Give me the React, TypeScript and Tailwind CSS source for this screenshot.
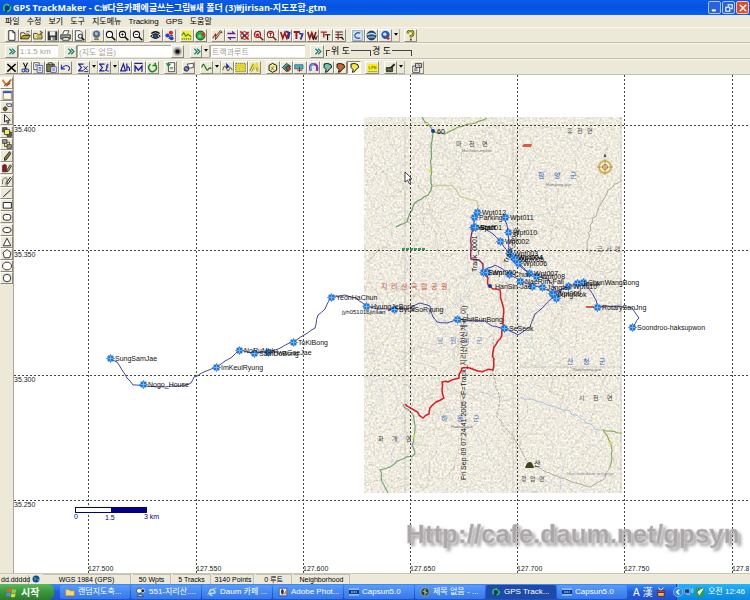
import type { ReactNode } from 'react';
import clsx from 'clsx';

const FONT = "font-['Liberation_Sans','Noto_Sans_CJK_KR',sans-serif]";

/* ---------- icons, all on a 16x16 grid ---------- */

const K = '#111';
const lens = (color = K) => (
  <>
    <circle cx="6.5" cy="6.5" r="4.5" fill="#fff" stroke={color} strokeWidth="1.5" />
    <path d="M10 10l5 5" stroke={color} strokeWidth="2.2" />
  </>
);
const pencil = <path d="M14 2l-7 9-2 3 0-4 7-9z" fill="#ffe98a" stroke={K} />;
const korea = (fill: string) => (
  <path d="M3 3l5-1 5 2 1 4-3 2-3 4-3 1 1-4-3-3z" fill={fill} stroke={K} strokeWidth="1.4" />
);
const letterW = (extra?: ReactNode) => (
  <>
    <path d="M1 3l3 9 3-8 3 8 3-9" fill="none" stroke="#a01818" strokeWidth="2.4" />
    {extra}
  </>
);

const ICONS: Record<string, ReactNode> = {
  new: <path d="M4 1h6l3 3v11H4z M10 1v3h3" fill="#fff" stroke={K} strokeWidth="1.2" />,
  open: (
    <>
      <path d="M1 13V4h5l1 2h6v2" fill="#fff3a0" stroke={K} />
      <path d="M1 13l3-5h11l-3 5z" fill="#b8a52a" stroke={K} />
      <path d="M9 3q3-3 5 0" fill="none" stroke={K} />
    </>
  ),
  merge: (
    <>
      <path d="M1 13V5h5l1 2h6v6z" fill="#f7ed90" stroke={K} />
      <path d="M4 9h7M6 11h8" stroke="#8a7b1c" />
      <path d="M10 1l4 3-4 2" fill="#d8b030" stroke={K} />
    </>
  ),
  save: (
    <>
      <path d="M1 2h14v13H1z" fill="#333" />
      <path d="M4 2h8v6H4z" fill="#eee" />
      <path d="M5 10h7v5H5z" fill="#888" />
      <path d="M6 11h2v4H6z" fill="#fff" />
    </>
  ),
  print: (
    <>
      <path d="M4 6l2-5h7l-2 5" fill="#fff" stroke={K} />
      <path d="M1 7h14v6H1z" fill="#999" stroke={K} />
      <path d="M4 11h9v4H4z" fill="#eee" stroke={K} />
      <path d="M11 9h2" stroke="#e8e020" strokeWidth="1.5" />
    </>
  ),
  preview: (
    <>
      <path d="M2 1h7l3 3v11H2z" fill="#fff" stroke={K} />
      <circle cx="9" cy="9" r="3" fill="#d7f0f6" stroke={K} strokeWidth="1.3" />
      <path d="M11 11l4 4" stroke={K} strokeWidth="2" />
    </>
  ),
  globe: (
    <>
      <circle cx="8" cy="6" r="5" fill="#2f6fd8" stroke="#777" />
      <path d="M6 3l4 1-1 4-3-1z" fill="#e4d040" />
      <path d="M5 14h6l-2-3H7z" fill="#c9ab34" stroke="#6a5514" />
    </>
  ),
  zoom: lens(),
  zoomIn: <>{lens()}<path d="M4 6.5h5M6.500 4v5" stroke={K} /></>,
  zoomOut: <>{lens()}<path d="M4 6.500h5" stroke={K} /></>,
  eye: (
    <>
      <path d="M1 9q7-7 14 0q-7 6-14 0z" fill="#fff" stroke={K} strokeWidth="1.4" />
      <circle cx="8" cy="9" r="3.500" fill="#1b4f9e" stroke={K} />
      <path d="M2 5q6-5 12 0" fill="none" stroke={K} strokeWidth="2" />
    </>
  ),
  pins: (
    <>
      <circle cx="10" cy="4" r="3" fill="#e02020" />
      <circle cx="5" cy="8" r="3" fill="#2040d0" />
      <circle cx="11" cy="12" r="3" fill="#2040d0" />
      <path d="M7 13l2-5 4 0" stroke={K} fill="none" />
    </>
  ),
  profile: (
    <>
      <path d="M1 1h14v14H1z" fill="#f4ee3a" />
      <path d="M1 8l3-4 3 5 3-3 5 4" fill="none" stroke="#3a7f18" strokeWidth="1.5" />
      <path d="M1 13h14" stroke="#111" strokeDasharray="2 1" />
    </>
  ),
  radar: (
    <>
      <circle cx="8" cy="8" r="6.5" fill="#20b040" stroke={K} />
      <path d="M8 8l4-5q3 3 2 6z" fill="#e83020" />
      <circle cx="7" cy="9" r="2.500" fill="#58e070" />
    </>
  ),
  trackEdit: <><path d="M1 12l4-6 2 5 4-8 4 1" fill="none" stroke="#b01c1c" strokeWidth="1.6" />{pencil}</>,
  swap: <path d="M2 5h10l-3-3M14 11H4l3 3" fill="none" stroke="#5a1ca8" strokeWidth="2" />,
  findRed: (
    <>
      <circle cx="8" cy="8" r="5.500" fill="#fff" stroke="#222" strokeWidth="1.3" />
      <path d="M2 2l12 12M14 3L3 13" stroke="#d01c1c" strokeWidth="2.400" />
      <path d="M6 8h4" stroke="#2030c0" strokeWidth="2" />
    </>
  ),
  lensW: <>{lens('#822')}<path d="M4 5l1 4 1.500-3 1.500 3 1-4" fill="none" stroke="#d01c1c" strokeWidth="1.600" /></>,
  lensT: <>{lens('#822')}<path d="M4 4.500h5M6.500 4.500v5" stroke="#d01c1c" strokeWidth="1.700" /></>,
  wBlue: letterW(<path d="M8 2l6 2-2 9" fill="none" stroke="#1c2cb0" strokeWidth="2.400" />),
  tBlue: (
    <>
      <path d="M1 3h9M5 3v10" stroke="#a01818" strokeWidth="2.800" />
      <path d="M9 5l5 1-3 8" fill="none" stroke="#1c2cb0" strokeWidth="2.400" />
    </>
  ),
  ww: letterW(<path d="M7 8l2 6 2-5 2 5 2-6" fill="none" stroke="#111" strokeWidth="1.300" />),
  tt: <><path d="M1 3h9M5.500 3v8" stroke="#c01c1c" strokeWidth="2" /><path d="M7 7h8M11 7v8" stroke="#111" strokeWidth="1.600" /></>,
  list: <><path d="M2 3h11M2 7h11M2 11h11" stroke="#333" strokeWidth="1.500" /><path d="M6 3v11" stroke="#a01818" strokeWidth="1.500" /><path d="M10 10l4 4" stroke={K} strokeWidth="2" /></>,
  letterC: (
    <>
      <path d="M1 1h14v14H1z" fill="#d6e6f6" stroke="#6688b8" />
      <path d="M12 4.500q-7-2-8 3.500q1 5.500 8 3.500" fill="none" stroke="#2d5fae" strokeWidth="2" />
    </>
  ),
  earth: (
    <>
      <circle cx="8" cy="8" r="6.500" fill="#1e4f86" stroke="#123" />
      <path d="M2 7q6-4 12 0" fill="none" stroke="#cfe3f3" strokeWidth="2" />
      <path d="M3 11q5-2 10 0" fill="none" stroke="#8fb8d8" strokeWidth="1.500" />
    </>
  ),
  bluePin: (
    <>
      <circle cx="8" cy="7" r="6" fill="#2058c8" />
      <circle cx="7" cy="6" r="2.500" fill="#dce8ff" />
      <path d="M9 9l6 3-4 3z" fill="#d02020" />
    </>
  ),
  help: <><path d="M4 5q0-4 4-4t4 4q0 3-3.500 4v2" fill="none" stroke="#5b5206" strokeWidth="3.400" /><path d="M4 5q0-4 4-4t4 4q0 3-3.500 4v2" fill="none" stroke="#e8dc30" strokeWidth="1.400" /><circle cx="8.500" cy="14" r="1.500" fill="#5b5206" /></>,
  del: <path d="M2 3l12 11M14 3L2 14" stroke="#000" strokeWidth="2.200" />,
  cut: <><path d="M5 1l4 9M11 1L7 10" stroke={K} strokeWidth="1.500" /><circle cx="5" cy="12.500" r="2.200" fill="none" stroke="#1c3ca0" strokeWidth="1.500" /><circle cx="10.500" cy="12.500" r="2.200" fill="none" stroke="#1c3ca0" strokeWidth="1.500" /></>,
  copy: <><path d="M1 1h8v10H1z" fill="#fff" stroke="#222" /><path d="M6 5h8v10H6z" fill="#fff" stroke="#1c2c90" /><path d="M8 8h4M8 10h4M8 12h4M3 4h4M3 6h2" stroke="#1c2c90" /></>,
  paste: <><path d="M1 3h11v11H1z" fill="#777a3c" stroke={K} /><path d="M4 1h5v3H4z" fill="#ddd" stroke={K} /><path d="M7 7h8v8H7z" fill="#fff" stroke="#1c2c90" /><path d="M9 10h4M9 12h4" stroke="#1c2c90" /></>,
  undo: <path d="M2 4v6h5M2 10q5-7 10-4q4 3 0 7" fill="none" stroke="#1c2cb0" strokeWidth="1.500" />,
  sumX: <><path d="M8 3H1l4 5-4 5h7" fill="none" stroke="#1c1c9c" strokeWidth="1.700" /><path d="M8 6l6 6M14 6l-6 6M9 14h6" stroke="#1c1c9c" strokeWidth="1.400" /></>,
  sumL: <><path d="M8 3H1l4 5-4 5h7" fill="none" stroke="#1c1c9c" strokeWidth="1.700" /><path d="M9 13q5-5 4-10q-3 0-2 10l4 0" fill="none" stroke="#1c1c9c" strokeWidth="1.200" /></>,
  deltaH: <path d="M1 13L5 3l3 10zM10 2v11M10 8q4-3 4 5" fill="none" stroke="#1c1c9c" strokeWidth="1.700" />,
  mean: <path d="M2 2h12M3 14V6l5 6 5-6v8" fill="none" stroke="#1c1c9c" strokeWidth="1.900" />,
  rotate: <path d="M5 3q-5 4-1 9t9-1q2-4-1-7M12 1v4h-4" fill="none" stroke="#18841c" strokeWidth="2.200" />,
  sheet: <><path d="M5 1h9v13H5z" fill="#fff" stroke={K} /><path d="M2 2l6 1-3 4z" fill="#189038" stroke="#189038" /><path d="M7 8h5M7 10h5" stroke="#555" /></>,
  gps: <><path d="M6 3l9-1v6L9 9z" fill="#fff" stroke={K} /><circle cx="5" cy="10" r="3.500" fill="#4860c8" stroke={K} /><path d="M3 8l4 4" stroke="#fff" /></>,
  wave: <path d="M1 8q2-7 4-3t3 6 3-1 4 0" fill="none" stroke="#287818" strokeWidth="1.800" />,
  waveArrow: <><path d="M1 12q2-8 4-5t3 5 3-2 4 2" fill="none" stroke="#7a6a18" strokeWidth="1.500" /><path d="M6 1v9l3-2h3z" fill="#1c2cc0" /></>,
  area: <><path d="M1 2h14v12H1z" fill="#e6dc2c" /><path d="M1 2h14v12H1z" fill="none" stroke="#555" strokeDasharray="2 1" /><path d="M4 6h1M8 5h1M11 8h1M6 10h1" stroke="#777" /></>,
  road: <><path d="M1 14L6 3l2 6 3-7 4 12" fill="none" stroke="#e8dc30" strokeWidth="2.600" /><path d="M4 14l3-6M11 8l1 6M1 13L6 3" fill="none" stroke="#8a7c08" strokeWidth="1.300" /></>,
  box3d: <><path d="M3 5l5-3 6 3v7l-6 3-5-3z" fill="#f4f090" stroke={K} strokeWidth="1.400" /><path d="M6 7l4 5M10 6l-4 6" stroke="#555" /></>,
  layers: <><path d="M2 8l6-6 6 4-6 8z" fill="#30a8a8" stroke={K} /><path d="M7 8l4-3 3 5-4 4z" fill="#d83838" stroke={K} /></>,
  flag: <><path d="M1 4h12v6H1z" fill="#48b8c0" stroke="#157" /><path d="M8 7v7M5 12h7" stroke="#c02020" strokeWidth="1.500" /></>,
  magnet: <><path d="M4 13Q1 3 8 3t5 10" fill="none" stroke="#7a38b8" strokeWidth="3.400" /><path d="M4 12Q2 4 8 3.500" fill="none" stroke="#48b8d8" strokeWidth="1.600" /></>,
  korea1: korea('#6cc8a8'),
  korea2: korea('#c86828'),
  korea3: korea('#f6ea40'),
  lpn: <><path d="M1 3h14v10H1z" fill="#f8f000" /><path d="M3 6v4h2M7 10V6h2v2H7M11 10V6l2 4V6M1 14h14" fill="none" stroke="#8a7d00" /></>,
  tool: <><path d="M2 8h9v6H2z" fill="#2a6a30" stroke={K} /><path d="M7 8l6-6 2 2-5 5z" fill="#222" /><path d="M4 11h5" stroke="#e04030" strokeWidth="1.500" /></>,
  props: <><path d="M1 6h10v9H1z" fill="#fff" stroke={K} /><path d="M5 2h9v6H5z" fill="#ccc" stroke={K} /><path d="M3 10h5M3 12h5M9 4l3 2" stroke={K} /></>,
  chevrons: <path d="M5 4l4 4-4 4M9 4l4 4-4 4" fill="none" stroke="#1a8078" strokeWidth="1.800" />,
  dot: <><circle cx="8" cy="8" r="6.500" fill="#bbb" /><circle cx="8" cy="8" r="4.500" fill="#777" /><circle cx="8" cy="8" r="3" fill="#111" /></>,
  paint: <><path d="M1 3l6 9 3-3 5-7" fill="none" stroke="#e08018" strokeWidth="3" /><path d="M3 13l10-9" stroke="#444" strokeWidth="1.500" /><path d="M8 12l5-4" stroke="#c82020" strokeWidth="2" /></>,
  windowIcon: <><path d="M2 2h13v13H2z" fill="#fffbe0" stroke="#555" /><path d="M2 2h13v3H2z" fill="#2050c8" /></>,
  wpt: <><path d="M7 3h8v4H9z" fill="#fff" stroke="#1c2c70" strokeWidth="1.300" /><circle cx="5" cy="11" r="3" fill="#c8c030" stroke={K} /><path d="M1 11h8M5 7v8" stroke={K} /></>,
  cursor: <path d="M4 1v12l3-3 2 5 2-1-2-4h4z" fill="#fff" stroke={K} strokeWidth="1.400" />,
  front: <><path d="M1 1h7v7H1zM8 8h7v7H8z" fill="#666" stroke={K} /><path d="M4 4h8v8H4z" fill="#f0f060" stroke={K} /></>,
  back: <><path d="M4 5h8v7H4z" fill="#f0f060" stroke={K} /><path d="M1 1h7v6H1zM8 9h7v6H8z" fill="#999" stroke={K} /></>,
  pen: <path d="M12 1l2 3-7 10-3 1 0-4z" fill="#8a8040" stroke={K} strokeWidth="1.300" />,
  redPen: <><path d="M1 4q4-3 6 0v10H1z" fill="#981818" stroke={K} /><path d="M13 3l2 2-5 8-2 1 0-3z" fill="#c8b870" stroke={K} strokeWidth="1.200" /></>,
  curvePen: <><path d="M1 13q-1-9 4-10t2 7q-3 5 2 5" fill="none" stroke="#444" strokeWidth="1.200" /><path d="M13 2l2 2-5 8-2 1 0-3z" fill="#fff" stroke={K} strokeWidth="1.400" /></>,
  line: <path d="M2 14L14 3" stroke={K} strokeWidth="1.500" />,
  rect: <path d="M2 4h13v9H2z" fill="#fff" stroke={K} strokeWidth="1.400" />,
  rrect: <rect x="2" y="4" width="12" height="9" rx="3.500" fill="#fff" stroke={K} strokeWidth="1.400" />,
  ellipse: <ellipse cx="8" cy="8" rx="6.500" ry="4" fill="#fff" stroke={K} strokeWidth="1.400" />,
  triangle: <path d="M8 2l6 12H2z" fill="#fff" stroke={K} strokeWidth="1.300" />,
  pentagon: <path d="M8 1l6.500 5-2.500 8H4L1.500 6z" fill="#fff" stroke={K} strokeWidth="1.300" />,
  octagon: <path d="M5 2h6l4 4v4l-4 4H5l-4-4V6z" fill="#fff" stroke={K} strokeWidth="1.300" />,
  circle: <circle cx="8" cy="8" r="6" fill="#fff" stroke={K} strokeWidth="1.300" />,
};

function Icon({ name, className = 'size-[11px]' }: { name: string; className?: string }) {
  return (
    <svg viewBox="0 0 16 16" className={className} aria-hidden="true">
      {ICONS[name]}
    </svg>
  );
}

function ToolButton({ name, active = false }: { name: string; active?: boolean }) {
  return (
    <button
      aria-label={name}
      className={clsx(
        'flex h-[13px] min-w-0 flex-1 items-center justify-center border',
        active
          ? 'border-t-[#8d8a7c] border-l-[#8d8a7c] border-r-white border-b-white bg-[#faf8f0]'
          : 'border-t-white border-l-white border-r-[#8d8a7c] border-b-[#8d8a7c]',
      )}
    >
      <Icon name={name} className="size-[11px] shrink-0" />
    </button>
  );
}

function Caret() {
  return (
    <button aria-label="more" className="flex h-[13px] w-2 items-center justify-center border-r border-b border-r-[#b5b2a2] border-b-[#b5b2a2]">
      <svg viewBox="0 0 6 4" className="w-1"><path d="M0 0h6L3 4z" fill="#000" /></svg>
    </button>
  );
}

function Group({ width, names, active }: { width: string; names: string[]; active?: string }) {
  return (
    <div className={clsx('flex shrink-0', width)}>
      {names.map((n) => <ToolButton key={n} name={n} active={n === active} />)}
    </div>
  );
}

/* ---------- map drawing ---------- */

type Pt = [number, number];

function makeRandom(seed: number) {
  let s = seed;
  return () => {
    s = (s * 16807) % 2147483647;
    return s / 2147483647;
  };
}

// splits every leg in short steps and shakes them a little, like a real GPS log
function trail(points: Pt[], amp: number, seed = 7) {
  const rnd = makeRandom(seed);
  let d = `M${points[0][0]} ${points[0][1]}`;
  for (let i = 1; i < points.length; i++) {
    const [x0, y0] = points[i - 1];
    const [x1, y1] = points[i];
    const n = Math.max(1, Math.round(Math.hypot(x1 - x0, y1 - y0) / 4));
    for (let k = 1; k <= n; k++) {
      const j = k === n ? 0 : amp;
      const x = x0 + ((x1 - x0) * k) / n + (rnd() - 0.5) * j;
      const y = y0 + ((y1 - y0) * k) / n + (rnd() - 0.5) * j;
      d += `L${x.toFixed(1)} ${y.toFixed(1)}`;
    }
  }
  return d;
}

const RIDGE: Pt[] = [
  [110, 358], [117, 362], [122, 370], [127, 378], [133, 385], [143, 386], [165, 387], [187, 385], [191, 383],
  [194, 377], [200, 374], [216, 367], [225, 361], [232, 357], [239, 350], [254, 353], [268, 352], [282, 347],
  [293, 342], [304, 335], [315, 328], [318, 315], [325, 309], [331, 297], [345, 295], [356, 298], [366, 306],
  [378, 309], [394, 309], [408, 309], [420, 303], [430, 306], [433, 317], [437, 322], [447, 323], [457, 319],
  [466, 320], [485, 321], [492, 326], [504, 328], [518, 335], [530, 327], [535, 314], [545, 305], [552, 298],
  [556, 298], [560, 290], [568, 286], [577, 283], [583, 282], [590, 290], [596, 300], [597, 307], [615, 306],
  [632, 308], [639, 318], [635, 324], [632, 327],
];
const NORTH: Pt[] = [
  [477, 212], [474, 217], [474, 227], [484, 228], [493, 234], [500, 241], [509, 253], [518, 263], [529, 273],
  [536, 276], [548, 279], [556, 290], [556, 298],
];
const EAST: Pt[] = [[505, 217], [508, 232], [509, 240], [509, 253], [514, 262], [529, 273]];
const VALLEY: Pt[] = [
  [483, 272], [488, 268], [495, 265], [501, 268], [509, 274], [520, 281], [532, 285], [542, 287], [552, 293],
  [568, 286],
];
const PURPLE: Pt[] = [[474, 227], [471, 237], [471, 259], [479, 260], [483, 264], [483, 272]];
const RED: Pt[] = [
  [483, 272], [488, 278], [488, 285], [493, 289], [500, 290], [503, 306], [504, 328], [498, 341], [493, 352],
  [493, 370], [478, 371], [470, 368], [462, 368], [459, 378], [448, 382], [442, 382], [442, 390], [444, 398],
  [436, 402], [430, 408], [429, 414], [423, 418], [414, 410], [405, 404],
];

const WAYPOINTS: { x: number; y: number; label?: string; bold?: boolean }[] = [
  { x: 110, y: 358, label: 'SungSamJae' },
  { x: 143, y: 384, label: 'Nogo_House' },
  { x: 216, y: 367, label: 'ImKeulRyung' },
  { x: 239, y: 350, label: 'NoRuMok' },
  { x: 254, y: 353, label: 'SamDoBong' },
  { x: 268, y: 352, label: 'HwaGaeJae' },
  { x: 293, y: 342, label: 'ToKiBong' },
  { x: 331, y: 297, label: 'YeonHaChun' },
  { x: 366, y: 306, label: 'HyungJeBong' },
  { x: 394, y: 309, label: 'ByukSoRyung' },
  { x: 457, y: 319, label: 'ChilSunBong' },
  { x: 504, y: 328, label: 'SeSeok' },
  { x: 477, y: 212, label: 'Wpt012' },
  { x: 474, y: 217, label: 'Parking' },
  { x: 473, y: 227, label: 'Wpt001' },
  { x: 475, y: 227, label: 'Start', bold: true },
  { x: 505, y: 217, label: 'Wpt011' },
  { x: 508, y: 232, label: 'Wpt010' },
  { x: 500, y: 241, label: 'Wpt002' },
  { x: 509, y: 253, label: 'Wpt003' },
  { x: 513, y: 257, label: 'Wpt004', bold: true },
  { x: 515, y: 259, label: 'Wpt005' },
  { x: 518, y: 263, label: 'Wpt006' },
  { x: 529, y: 273, label: 'Wpt007' },
  { x: 536, y: 276, label: 'Wpt008' },
  { x: 483, y: 272, label: 'Sam' },
  { x: 487, y: 272, label: 'Wpt000' },
  { x: 509, y: 274, label: 'Chun' },
  { x: 520, y: 281, label: 'NaeRim-Fall' },
  { x: 532, y: 286 },
  { x: 542, y: 287, label: 'Jangter' },
  { x: 552, y: 293, label: 'Wpt009' },
  { x: 553, y: 294, label: 'JungMok' },
  { x: 556, y: 298 },
  { x: 568, y: 286, label: 'Wpt010' },
  { x: 577, y: 283, label: 'Jesuk' },
  { x: 583, y: 282, label: 'ChunWangBong' },
  { x: 597, y: 307, label: 'RotarySanJng' },
  { x: 632, y: 327, label: 'Soondroo-haksupwon' },
];

function Waypoint({ x, y }: { x: number; y: number }) {
  return (
    <g transform={`translate(${x + 0.5} ${y + 0.5})`}>
      <path d="M-4 0H4M0-4V4" stroke="#123c9a" strokeWidth="1" />
      <rect x="-3" y="-3" width="6" height="6" rx="1" fill="#1e78e0" />
      <path d="M-3 0H3M0-3V3" stroke="#7cc4ff" strokeWidth=".8" />
    </g>
  );
}

// faint contour lines and streams on the scanned sheet
function sheetLines(count: number, seed: number, step: number) {
  const rnd = makeRandom(seed);
  const out: string[] = [];
  for (let i = 0; i < count; i++) {
    let x = 364 + rnd() * 258;
    let y = 117 + rnd() * 376;
    let a = rnd() * 6.28;
    let d = `M${x.toFixed(1)} ${y.toFixed(1)}`;
    for (let k = 0; k < 12; k++) {
      a += (rnd() - 0.5) * 1.3;
      x += Math.cos(a) * step;
      y += Math.sin(a) * step;
      d += `L${x.toFixed(1)} ${y.toFixed(1)}`;
    }
    out.push(d);
  }
  return out.join('');
}

const PLACES: { x: number; y: number; text: string; size: number; fill: string; gap: number }[] = [
  { x: 538, y: 178, text: '함양군', size: 7, fill: '#3b68bc', gap: 16 },
  { x: 381, y: 289, text: '지리산국립공원', size: 7, fill: '#cc5a42', gap: 10 },
  { x: 437, y: 343, text: '남원시군', size: 7, fill: '#7890c4', gap: 13 },
  { x: 567, y: 364, text: '산청군', size: 7, fill: '#3b68bc', gap: 16 },
  { x: 441, y: 421, text: '하동군', size: 7, fill: '#4c74bc', gap: 16 },
  { x: 456, y: 146, text: '마천면', size: 6, fill: '#444', gap: 13 },
  { x: 567, y: 133, text: '휴천면', size: 6, fill: '#555', gap: 10 },
  { x: 597, y: 251, text: '금서면', size: 6, fill: '#777', gap: 9 },
  { x: 579, y: 400, text: '시천면', size: 6, fill: '#444', gap: 14 },
  { x: 378, y: 441, text: '화개면', size: 6, fill: '#444', gap: 14 },
  { x: 521, y: 481, text: '청암면', size: 6, fill: '#555', gap: 9 },
];

const MERIDIANS = [
  { x: 88, label: '127.500' }, { x: 196, label: '127.550' }, { x: 303, label: '127.600' },
  { x: 410, label: '127.650' }, { x: 517, label: '127.700' }, { x: 624, label: '127.750' },
  { x: 732, label: '127.8' },
];
const PARALLELS = [
  { y: 125, label: '35.400' }, { y: 250, label: '35.350' },
  { y: 375, label: '35.300' }, { y: 500, label: '35.250' },
];

function TrackMap() {
  return (
    <svg
      viewBox="14 75 736 498"
      preserveAspectRatio="xMinYMin slice"
      className={clsx('block size-full bg-white', FONT)}
      role="img"
      aria-label="jirisan"
    >
      <defs>
        <clipPath id="sheet"><rect x="364" y="117" width="258" height="376" /></clipPath>
        <filter id="grain" x="0" y="0" width="1" height="1" colorInterpolationFilters="sRGB">
          <feTurbulence type="fractalNoise" baseFrequency=".45" numOctaves="3" seed="4" />
          <feColorMatrix values=".25 .2 0 0 .71  .2 .25 0 0 .695  .1 .2 .2 0 .625  0 0 0 0 1" />
        </filter>
        <filter id="lift" x="-.05" y="-.3" width="1.1" height="1.8">
          <feDropShadow dx="3" dy="3" stdDeviation="1.500" floodColor="#777" floodOpacity=".6" />
        </filter>
      </defs>

      <g clipPath="url(#sheet)">
        <rect x="364" y="117" width="258" height="376" filter="url(#grain)" />
        <g fill="none" strokeWidth=".7">
          <path d={sheetLines(90, 11, 4)} stroke="#a39c80" opacity=".35" />
          <path d={sheetLines(40, 29, 5)} stroke="#8aa6cc" opacity=".35" />
          <path d={sheetLines(20, 53, 6)} stroke="#9a9488" opacity=".4" strokeDasharray="2 1" />
          <path d="M405 117V493M513 117V493M621 117V493M520 367H621" stroke="#9c9c94" opacity=".5" />
          <path d="M590 251H621M590 251V270" stroke="#9c9c94" opacity=".6" strokeDasharray="3 2" />
        </g>
        <g fill="none" strokeWidth="1.200">
          <path d={trail([[422, 117], [428, 124], [433, 131], [431, 145], [431, 165], [431, 180], [432, 186], [428, 195], [415, 203], [410, 213], [407, 222], [396, 227]], 1.5)} stroke="#6fa06a" />
          <path d={trail([[433, 131], [444, 134], [458, 127], [475, 123], [487, 118]], 1.5)} stroke="#87a95e" />
          <path d={trail([[403, 404], [413, 415], [415, 430], [412, 445], [415, 454], [400, 460], [387, 468], [380, 470], [382, 482], [388, 493]], 2)} stroke="#7aa87c" />
          <path d={trail([[622, 433], [603, 430], [611, 443], [612, 458], [610, 467]], 1.5)} stroke="#8cae60" />
          <path d={trail([[432, 186], [452, 185], [461, 197], [477, 201], [478, 212]], 1.5)} stroke="#d0c690" />
          <path d="M402 249H425" stroke="#3c9a58" strokeWidth="2" strokeDasharray="3 1" />
          <path d={trail([[494, 338], [493, 375], [500, 400], [497, 417], [515, 440], [528, 462]], 2)} stroke="#a8a498" strokeWidth=".9" strokeDasharray="3 1" />
          <path d={trail([[622, 180], [608, 190], [600, 205], [590, 225], [587, 250]], 3)} stroke="#a8a498" strokeWidth=".9" />
          <path d={trail([[530, 464], [560, 478], [590, 487], [603, 480], [610, 467]], 2)} stroke="#a8a498" strokeWidth=".9" />
          <path d={trail([[600, 430], [580, 418], [565, 410], [540, 402], [520, 397]], 3)} stroke="#a4bcd8" strokeWidth=".9" />
        </g>
        <path d="M522 146l2-2h8l-1 3h-8z" fill="#dc5a40" />
        <path d="M586 307h8" stroke="#dc5a40" strokeWidth="2" />
        <circle cx="430" cy="171" r="1.500" fill="#e4dc3c" />
        <circle cx="427" cy="124" r="1.300" fill="#e4dc3c" />
        <circle cx="414" cy="436" r="1.500" fill="#e4dc3c" />
        <circle cx="611" cy="443" r="1.500" fill="#e4dc3c" />
        {PLACES.map((p) => (
          <g key={p.text + p.x} fontSize={p.size} fill={p.fill}>
            {p.text.split('').map((ch, i) => <text key={i} x={p.x + i * p.gap} y={p.y}>{ch}</text>)}
          </g>
        ))}
        <g fontSize="4" fill="#777">
          <text x="462" y="152">Macheon-myeon</text>
          <text x="546" y="186">Hamyang-gun</text>
          <text x="573" y="371">Sancheong-gun</text>
          <text x="451" y="428">Hadong-gun</text>
        </g>
        <text x="567" y="475" fontSize="4" fill="#8a8a98">http://cafe.daum.net/gpsyn</text>
      </g>

      {/* compass rose */}
      <g transform="translate(605 167)">
        <circle r="6" fill="#fbf6d8" stroke="#d0b458" strokeWidth="2" />
        <path d="M0-8V8M-8 0H8" stroke="#a08a4c" strokeWidth=".8" />
        <circle r="2.500" fill="none" stroke="#c06a30" />
        <path d="M0-14l-1.500 4h3z" fill="#555" />
      </g>

      <path d="M525 468q2-7 5-6q2-1 4 6z" fill="#3d4420" />
      <text x="534" y="466" fontSize="7" fill="#111">산</text>
      <circle cx="433" cy="131" r="2" fill="#123c9a" />
      <text x="437" y="134" fontSize="7">60</text>

      <g stroke="#444" strokeWidth="1" strokeDasharray="2 2" shapeRendering="crispEdges">
        {MERIDIANS.map((m) => <path key={m.x} d={`M${m.x + 0.5} 75V573`} />)}
        {PARALLELS.map((p) => <path key={p.y} d={`M14 ${p.y + 0.5}H750`} />)}
      </g>
      <g fontSize="7" fill="#222">
        {MERIDIANS.map((m) => <text key={m.x} x={m.x} y="571">{m.label}</text>)}
        {PARALLELS.map((p) => <text key={p.y} x="14" y={p.y + 7}>{p.label}</text>)}
      </g>

      <g fill="none" strokeLinejoin="round">
        <path d={trail(RIDGE, 1)} stroke="#4444a4" />
        <path d={trail(NORTH, 1, 3)} stroke="#3a3ab4" />
        <path d={trail(EAST, 1, 5)} stroke="#3a3ab4" />
        <path d={trail(VALLEY, 1, 9)} stroke="#3a3ab4" />
        <path d={trail(PURPLE, 1, 4)} stroke="#8a1c5c" strokeWidth="1.300" />
        <path d={trail(RED, 2, 8)} stroke="#dc1c24" strokeWidth="1.500" />
      </g>

      {WAYPOINTS.map((w, i) => <Waypoint key={i} x={w.x} y={w.y} />)}
      <circle cx="490" cy="286" r="2" fill="#123c9a" />
      <g fontSize="7" fill="#111">
        {WAYPOINTS.map((w, i) => w.label && (
          <text key={i} x={w.x + 5} y={w.y + 3} fontWeight={w.bold ? 700 : 400}>{w.label}</text>
        ))}
        <text x="495" y="289">HanSin-Jae</text>
        <text x="342" y="314" fontSize="6">jyh051016jirisan</text>
        <text transform="translate(477 272) rotate(-90)">Track_0001</text>
        <text transform="translate(508 264) rotate(-72)">Track_0002</text>
        <text transform="translate(466 480) rotate(-90)">
          Fri Sep 09 07:24:41 2005 &lt;F=Track_지리산(한신계곡_이)
        </text>
      </g>

      {/* scale bar */}
      <rect x="75.500" y="507.500" width="71" height="5" fill="#fff" stroke="#000080" />
      <rect x="111" y="507" width="36" height="6" fill="#000080" />
      <g fontSize="7" fill="#000080">
        <text x="74" y="519">0</text>
        <text x="105" y="520">1.5</text>
        <text x="144" y="519">3 km</text>
      </g>

      <path d="M405 172v10l2.500-2 2 4 1.500-1-2-4h3z" fill="#fff" stroke="#222" strokeWidth=".8" />

      <text
        x="406"
        y="543"
        fontSize="26"
        fontWeight="700"
        fill="#aca6a8"
        stroke="#c6c2c4"
        strokeWidth=".6"
        filter="url(#lift)"
      >
        Http://cafe.daum.net/gpsyn
      </text>
    </svg>
  );
}

/* ---------- window chrome ---------- */

const MENU = ['파일', '수정', '보기', '도구', '지도메뉴', 'Tracking', 'GPS', '도움말'];

const SIDE_TOOLS = [
  ['paint', 'windowIcon', 'wpt', 'cursor'],
  ['front', 'back', 'pen', 'redPen'],
  ['curvePen', 'line', 'rect', 'rrect'],
  ['ellipse', 'triangle', 'pentagon', 'octagon', 'circle'],
];

const STATUS = [
  { text: 'WGS 1984 (GPS)', width: 'w-[88px]' },
  { text: '50 Wpts', width: 'w-[38px]' },
  { text: '5 Tracks', width: 'w-[38px]' },
  { text: '3140 Points', width: 'w-[41px]' },
  { text: '0 루트', width: 'w-[36px]' },
  { text: 'Neighborhood', width: 'w-[56px]' },
];

const TASKS = [
  { text: '랜덤지도축...', icon: <path d="M1 4h5l2 2h7v8H1z" fill="#f6dc6c" stroke="#a8842c" /> },
  { text: '551-지리산....', icon: <><circle cx="5" cy="6" r="4" fill="#fff" stroke="#222" /><circle cx="11" cy="6" r="3" fill="#222" stroke="#fff" /><path d="M2 15q4-7 10 0z" fill="#ddd" stroke="#222" /></> },
  { text: 'Daum 카페 ...', icon: <><path d="M13 10H4q1 4 5 3M4 8q1-5 5-4t4 6" fill="none" stroke="#a8dcff" strokeWidth="2.400" /><path d="M1 13Q5 3 15 2" fill="none" stroke="#f4cc40" strokeWidth="1.500" /></> },
  { text: 'Adobe Phot...', icon: <><path d="M2 2h12v12H2z" fill="#eef" stroke="#335" /><path d="M6 12q-3-7 1-9 4 2 1 9z" fill="#334" /><path d="M9 12l3-7 2 6z" fill="#c84" /></> },
  { text: 'Capsun5.0', icon: <><path d="M0 2h16v12H0z" fill="#7ec4f0" /><path d="M0 5h16v6H0z" fill="#0c2a90" /><path d="M3 8h10" stroke="#fff" strokeWidth="1.500" strokeDasharray="3 1" /></> },
  { text: '제목 없음 - ...', icon: <><circle cx="8" cy="8" r="6.500" fill="#383828" stroke="#a8c8a0" /><path d="M4 6l8 4M8 3v10" stroke="#8cc0a0" strokeWidth="2" /></> },
  { text: 'GPS Track...', active: true, icon: <><circle cx="8" cy="8" r="6" fill="#103c60" /><path d="M4 12Q1 4 8 3l3 2M12 5q3 6-3 8" fill="none" stroke="#38c870" strokeWidth="2.400" /></> },
  { text: 'Capsun5.0', icon: <><path d="M0 2h16v12H0z" fill="#7ec4f0" /><path d="M0 5h16v6H0z" fill="#0c2a90" /><path d="M3 8h10" stroke="#fff" strokeWidth="1.500" strokeDasharray="3 1" /></> },
];

function TitleBar() {
  return (
    <header className="flex h-[15px] shrink-0 items-center bg-linear-to-b from-[#0a5be8] via-[#0453de] to-[#0560f4] px-px text-white">
      <svg viewBox="0 0 16 16" className="mr-px ml-px size-2.5" aria-hidden="true">
        <circle cx="8" cy="8" r="7" fill="#0a3c74" />
        <path d="M4 13Q0 4 8 2l4 2M13 5q3 6-5 9" fill="none" stroke="#36c87c" strokeWidth="2.500" />
      </svg>
      <h1 className="flex-1 truncate font-['Open_Sans','Noto_Sans_CJK_KR',sans-serif] text-[9px] leading-[14px] font-bold">
        GPS TrackMaker - C:₩다음카페에글쓰는그림₩새 폴더 (3)₩jirisan-지도포함.gtm
      </h1>
      <div className="flex gap-px">
        <button aria-label="Minimize" className="flex size-[13px] items-center justify-center rounded-xs border border-[#a8c4f8] bg-[#2a62dc]">
          <svg viewBox="0 0 10 10" className="size-2"><path d="M1 8h5" stroke="#fff" strokeWidth="2.500" /></svg>
        </button>
        <button aria-label="Restore" className="flex size-[13px] items-center justify-center rounded-xs border border-[#a8c4f8] bg-[#2a62dc]">
          <svg viewBox="0 0 10 10" className="size-2"><path d="M4 3V1h5v5H7M1 4h5v5H1z" fill="none" stroke="#fff" strokeWidth="1.400" /></svg>
        </button>
        <button aria-label="Close" className="flex size-[13px] items-center justify-center rounded-xs border border-[#f4c4b4] bg-[#dc4c28]">
          <svg viewBox="0 0 10 10" className="size-2"><path d="M1 1l8 8M9 1L1 9" stroke="#fff" strokeWidth="1.800" /></svg>
        </button>
      </div>
    </header>
  );
}

const rowCls = 'flex h-4 shrink-0 items-center border-b border-[#c4c1b2] border-t border-t-[#f7f5ec] pl-[5px]';
const fieldCls = 'h-3 border-t border-l border-[#aca899] bg-white px-px text-[8px] leading-[10px] text-[#a5a295]';

export default function App() {
  return (
    <div className={clsx('flex h-screen flex-col overflow-hidden bg-[#ece9d8] text-black', FONT)}>
      <TitleBar />

      <nav className="flex h-3 shrink-0 items-center gap-[7px] pl-[5px] text-[8px] leading-[11px]">
        {MENU.map((m) => <button key={m}>{m}</button>)}
      </nav>

      <div className={rowCls}>
        <Group width="w-[81px]" names={['new', 'open', 'merge', 'save', 'print', 'preview']} />
        <div className="w-1" />
        <Group width="w-[54px]" names={['globe', 'zoom', 'zoomIn', 'zoomOut']} />
        <div className="w-[5px]" />
        <Group width="w-[27px]" names={['eye', 'pins']} />
        <div className="w-1" />
        <Group width="w-[27px]" names={['profile', 'radar']} />
        <div className="w-1" />
        <Group width="w-[135px]" names={['trackEdit', 'swap', 'findRed', 'lensW', 'lensT', 'wBlue', 'tBlue', 'ww', 'tt', 'list']} />
        <div className="w-[5px]" />
        <Group width="w-[41px]" names={['letterC', 'earth', 'bluePin']} />
        <Caret />
        <div className="w-1" />
        <Group width="w-[13px]" names={['help']} />
      </div>

      <div className={rowCls}>
        <Group width="w-[13px]" names={['chevrons']} />
        <input aria-label="Scale" defaultValue="1:1.5 km" className={clsx(fieldCls, 'w-10')} />
        <div className="w-1.5" />
        <Group width="w-[13px]" names={['chevrons']} />
        <input aria-label="Map" defaultValue="(지도 없음)" className={clsx(fieldCls, 'w-[94px]')} />
        <Group width="w-[13px]" names={['dot']} />
        <div className="w-1.5" />
        <Group width="w-3" names={['chevrons']} />
        <Caret />
        <input aria-label="Track" defaultValue="트랙과루트" className={clsx(fieldCls, 'w-[95px]')} />
        <div className="w-[5px]" />
        <Group width="w-[14px]" names={['chevrons']} />
        <div className="ml-0.5 flex items-center text-[9px] leading-3">
          <span className="mt-1 h-1.5 w-1 border-t border-l border-[#444]" />
          <span className="px-px">위 도</span>
          <span className="mt-1 h-1.5 w-5 border-t border-r border-[#444]" />
          <span className="px-px">경 도</span>
          <span className="mt-1 h-1.5 w-5 border-t border-r border-[#444]" />
        </div>
      </div>

      <div className={rowCls}>
        <Group width="w-[67px]" names={['del', 'cut', 'copy', 'paste', 'undo']} />
        <div className="w-[5px]" />
        <Group width="w-[13px]" names={['sumX']} />
        <Caret />
        <Group width="w-[13px]" names={['sumL']} />
        <Caret />
        <Group width="w-10" names={['deltaH', 'mean', 'rotate']} />
        <div className="w-[5px]" />
        <Group width="w-[13px]" names={['sheet']} />
        <div className="w-[5px]" />
        <Group width="w-[13px]" names={['gps']} />
        <div className="w-[5px]" />
        <Group width="w-[13px]" names={['wave']} />
        <Caret />
        <Group width="w-10" names={['waveArrow', 'area', 'road']} />
        <div className="w-[5px]" />
        <Group width="w-[95px]" names={['box3d', 'layers', 'flag', 'magnet', 'korea1', 'korea2', 'korea3']} active="korea3" />
        <div className="w-1" />
        <Group width="w-[14px]" names={['lpn']} />
        <div className="w-[5px]" />
        <Group width="w-[13px]" names={['tool']} />
        <Caret />
        <div className="w-1.5" />
        <Group width="w-[13px]" names={['props']} />
      </div>

      <div className="flex min-h-0 flex-1">
        <aside className="flex w-[14px] shrink-0 flex-col gap-px border-r border-[#aca899] pt-0.5">
          {SIDE_TOOLS.map((tools, i) => (
            <div key={i} className="flex flex-col">
              {tools.map((t) => (
                <button
                  key={t}
                  aria-label={t}
                  className={clsx(
                    'flex h-3 items-center justify-center border border-t-white border-l-white border-r-[#8d8a7c] border-b-[#8d8a7c]',
                    t === 'paint' && 'bg-[#faf8f0]',
                  )}
                >
                  <Icon name={t} className="size-2.5 shrink-0" />
                </button>
              ))}
            </div>
          ))}
        </aside>
        <main className="min-w-0 flex-1 overflow-hidden">
          <TrackMap />
        </main>
      </div>

      <footer className="flex h-[11px] shrink-0 items-center gap-0.5 border-t border-[#c9c6b6] pl-px text-[7px] leading-[9px] whitespace-nowrap">
        <span className="w-7 border-r border-[#c4c1b2]">dd.ddddd</span>
        <svg viewBox="0 0 16 16" className="mx-px size-2" aria-hidden="true">
          <circle cx="8" cy="8" r="7" fill="#1840a8" />
          <path d="M3 4l6 1 0 4-4 3z" fill="#28a050" />
          <path d="M11 7l3 2-2 4z" fill="#50c8d8" />
        </svg>
        {STATUS.map((s) => (
          <span key={s.text} className={clsx('border-t border-r border-[#c4c1b2] text-center', s.width)}>{s.text}</span>
        ))}
      </footer>

      <div className="flex h-4 shrink-0 items-center bg-linear-to-b from-[#3f8cf3] via-[#245edb] to-[#1f50c8] text-[8px] text-white">
        <button className="flex h-full w-[54px] shrink-0 items-center gap-1 rounded-r-md bg-linear-to-b from-[#5cb85c] via-[#3a963a] to-[#2c7c2c] pl-1.5 text-[10px] font-bold">
          <svg viewBox="0 0 16 16" className="size-[11px]" aria-hidden="true">
            <path d="M2 3q3-2 6 0L7 8Q4 6 1 8z" fill="#f05a28" />
            <path d="M9 3q3 2 6 0l-1 5q-3 2-6 0z" fill="#8cd03c" />
            <path d="M1 9q3-2 6 0l-1 5q-3-2-6 0z" fill="#4c8cf0" />
            <path d="M8 9q3 2 6 0l-1 5q-3 2-6 0z" fill="#f8d030" />
          </svg>
          시작
        </button>
        <div className="flex min-w-0 flex-1 gap-px pr-1.5 pl-1.5">
          {TASKS.map((t, i) => (
            <button
              key={i}
              className={clsx(
                'flex h-[14px] min-w-0 flex-1 items-center gap-[3px] rounded-xs pl-[5px] whitespace-nowrap',
                t.active ? 'bg-[#1e4ba8]' : 'bg-linear-to-b from-[#5a9af8] to-[#3577ea]',
              )}
            >
              <svg viewBox="0 0 16 16" className="size-2.5 shrink-0" aria-hidden="true">{t.icon}</svg>
              <span className="truncate">{t.text}</span>
            </button>
          ))}
        </div>
        <div className="flex w-[43px] shrink-0 items-center gap-[3px] text-[10px]">
          <span>A</span>
          <span>漢</span>
          <svg viewBox="0 0 16 16" className="size-2.5" aria-hidden="true">
            <path d="M2 6h12l-1 9H3z" fill="#e8b040" stroke="#402" />
            <path d="M4 1l3 4M12 1L8 5M4 10h8" stroke="#fff" strokeWidth="1.500" />
            <path d="M3 7h10v3H3z" fill="#822" />
          </svg>
        </div>
        <div className="flex h-full w-[74px] shrink-0 items-center gap-px border-l border-[#0a4cae] bg-linear-to-b from-[#27b4f6] via-[#129bee] to-[#0f86dc]">
          <svg viewBox="0 0 16 16" className="-ml-1 size-2.5" aria-hidden="true">
            <circle cx="8" cy="8" r="7.500" fill="#2c84e8" stroke="#9cd0ff" />
            <path d="M10 4L6 8l4 4" fill="none" stroke="#fff" strokeWidth="2.500" />
          </svg>
          <svg viewBox="0 0 16 16" className="size-2.5" aria-hidden="true">
            <path d="M1 3h8v7H1zM4 12h6" fill="#223c70" stroke="#bcd" />
            <path d="M11 3q2 3 0 6M13 2q3 4 0 8" fill="none" stroke="#def" />
          </svg>
          <svg viewBox="0 0 16 16" className="size-2.5" aria-hidden="true">
            <path d="M1 1h14v14H1z" fill="#2ca048" />
            <path d="M4 8l3 5 7-11-5 2z" fill="#fff" />
          </svg>
          <span className="ml-0.5 whitespace-nowrap">오전 12:46</span>
        </div>
      </div>
    </div>
  );
}
